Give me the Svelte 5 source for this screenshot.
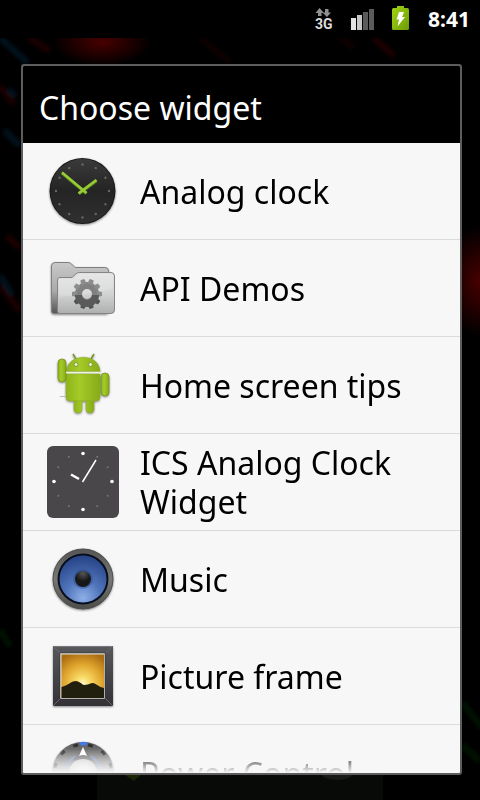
<script>
  const widgets = [
    { id: 'clock', name: 'Analog clock' },
    { id: 'folder', name: 'API Demos' },
    { id: 'android', name: 'Home screen tips' },
    { id: 'ics', name: 'ICS Analog Clock Widget' },
    { id: 'music', name: 'Music' },
    { id: 'frame', name: 'Picture frame' },
    { id: 'power', name: 'Power Control' }
  ];
  const hours = Array.from({ length: 12 }, (_, i) => i);
  const teeth = Array.from({ length: 10 }, (_, i) => i * 36 + 18);
</script>

<div class="screen">
  <svg class="wallpaper" viewBox="0 0 480 800" preserveAspectRatio="xMidYMid slice" aria-hidden="true">
    <defs>
      <radialGradient id="glow"><stop offset="0" stop-color="#480000" /><stop offset="1" stop-color="#480000" stop-opacity="0" /></radialGradient>
      <filter id="soft"><feGaussianBlur stdDeviation="2" /></filter>
    </defs>
    <ellipse cx="102" cy="42" rx="50" ry="24" fill="url(#glow)" />
    <ellipse cx="480" cy="281" rx="38" ry="56" fill="url(#glow)" />
    <g filter="url(#soft)" stroke-width="6" fill="none" opacity=".75">
      <path d="M28 37l22 14M7 236l13 12M0 285l20 26M374 38l20 18M0 86l14 18" stroke="#2c0304" />
      <path d="M0 38l28 25M8 90l8 6M4 130l16 16M0 275l12 20" stroke="#041a2c" />
      <path d="M462 702l20 26M0 630l10 16M462 745l18 16" stroke="#031c06" />
      <path d="M200 38l30 24M338 36l16 12" stroke="#160203" />
    </g>
    <path d="M97 772h286v28H97z" fill="#080a07" />
    <path d="M125 775h16l-7 6z" fill="#182604" />
    <ellipse cx="337" cy="774" rx="15" ry="6" fill="#181a18" />
  </svg>

  <header class="status">
    <svg width="18" height="24" viewBox="0 0 18 24" role="img" aria-label="3G data">
      <path d="M5.500 1L10 6H7.500V9H4V6H1.500zM13 10L8.500 5.500H11V2h3.500V5.500H17z" fill="#909090" />
      <text x="1" y="22">3G</text>
    </svg>
    <svg width="24" height="24" viewBox="0 0 24 24" role="img" aria-label="Signal strength">
      <path d="M1 11h5v12H1z" fill="#e4e4e4" /><path d="M7 8h5v15H7z" fill="#c8c8c8" />
      <path d="M13 5h5v18h-5zM19 2h5v21h-5z" fill="#5b5b5b" />
    </svg>
    <svg width="18" height="26" viewBox="0 0 18 26" role="img" aria-label="Battery charging">
      <defs><linearGradient id="bat" x2="1" y2="1"><stop stop-color="#a4d414" /><stop offset="1" stop-color="#6b9c05" /></linearGradient></defs>
      <path d="M1.500 2H5V0h7v2h3.500Q17 2 17 4v18.500q0 1.500-1.500 1.500h-14Q0 24 0 22.500V4Q0 2 1.500 2z" fill="url(#bat)" />
      <path d="M7 6h5l-2 5h3L5.500 20.500l1.500-7H4.500z" fill="#fff" />
    </svg>
    <time>8:41</time>
  </header>

  <section class="dialog" aria-labelledby="dialog-title">
    <h1 id="dialog-title">Choose widget</h1>
    <ul>
      {#each widgets as widget (widget.id)}
        <li>
          <button type="button">
            <svg class="icon" viewBox="0 0 72 72" aria-hidden="true">
              {#if widget.id === 'clock'}
                <defs><linearGradient id="face" x2="0" y2="1"><stop stop-color="#3a3a3a" /><stop offset=".5" stop-color="#242424" /><stop offset="1" stop-color="#303030" /></linearGradient></defs>
                <circle class="shadow" cx="35.500" cy="36" r="33" fill="#191919" />
                <circle cx="35.500" cy="36" r="32" fill="url(#face)" />
                {#each hours as h}
                  <circle cx="35.500" cy="9.500" r="1.200" fill="#686868" transform="rotate({h * 30} 35.5 36)" />
                {/each}
                <path d="M32 38.500L49.500 25.500M39.500 38.500L15 18" stroke="#527817" stroke-width="3.500" />
                <path d="M31.500 38.500L49.500 25M39.500 38L15 17.500" stroke="#98cb38" stroke-width="2.500" />
              {:else if widget.id === 'folder'}
                <defs>
                  <linearGradient id="back" x2="0" y2="1"><stop stop-color="#c9c9c9" /><stop offset=".55" stop-color="#aaa" /><stop offset="1" stop-color="#555" /></linearGradient>
                  <linearGradient id="front" x2="0" y2="1"><stop stop-color="#e2e2e2" /><stop offset=".5" stop-color="#d3d4d4" /><stop offset="1" stop-color="#aeb0b0" /></linearGradient>
                </defs>
                <path class="shadow" d="M4.500 59V14Q4.500 10.500 8 10.500H21Q23 10.500 24.500 12L28 15.500H58Q61.500 15.500 61.500 19V59Q61.500 61.500 58 61.500H7Q4.500 61.500 4.500 59z" fill="url(#back)" stroke="#808080" />
                <path d="M10.500 59V28Q10.500 25.500 13 25.500H25L30 21Q31 20.500 33 20.500H64Q67.500 20.500 67.500 24V58Q67.500 61.500 64 61.500H13Q10.500 61.500 10.500 59z" fill="url(#front)" stroke="#858585" />
                <path d="M12 45Q40 43 66 37V24Q66 22 64 22H33L26 27H12z" fill="#fff" opacity=".18" />
                <g transform="translate(40 42)">
                  <circle r="8.500" fill="none" stroke="#808080" stroke-width="7" />
                  {#each teeth as a}
                    <path d="M-3-10l1-5h4l1 5z" fill={a > 90 && a < 270 ? '#505151' : '#8c8c8c'} transform="rotate({a})" />
                  {/each}
                  <path d="M-12 1A12 12 0 0 0 12 1L5 1A5 5 0 0 1-5 1z" fill="#5a5a5a" />
                </g>
              {:else if widget.id === 'android'}
                <defs><linearGradient id="bot"><stop stop-color="#8eb41c" /><stop offset=".4" stop-color="#a4cb27" /><stop offset="1" stop-color="#86ab18" /></linearGradient></defs>
                <g class="shadow">
                  <path d="M26 5L29 10M47 5L44 10" stroke="#789525" stroke-width="1.500" />
                  <path d="M19.500 22.500C20.500 3.500 52.500 3.500 53 22.500zM19 25H53V48Q53 52 49 52H23Q19 52 19 48z" fill="url(#bot)" stroke="#8ba926" stroke-width=".5" />
                  <rect x="11" y="10" width="8" height="23" rx="4" fill="url(#bot)" stroke="#6d8e13" stroke-width=".7" />
                  <rect x="54" y="24" width="8" height="23" rx="4" fill="url(#bot)" stroke="#6d8e13" stroke-width=".7" />
                  <path d="M27 52h8v8q0 4-4 4t-4-4zM39 52h8v8q0 4-4 4t-4-4z" fill="url(#bot)" stroke="#8ba926" stroke-width=".5" />
                </g>
                <path d="M19 23.500H53" stroke="#eef5d4" stroke-width="1.500" />
                <g fill="#e8edda" stroke="#728d24" stroke-width=".8"><circle cx="29" cy="15.500" r="2" /><circle cx="43.500" cy="15.500" r="2" /></g>
                <path d="M13 47.500h5" stroke="#bbb" />
              {:else if widget.id === 'ics'}
                <rect width="72" height="72" rx="6" fill="#49474a" />
                {#each hours as h}
                  {#if h % 3 === 0}
                    <circle cx="36" cy={h % 6 === 0 ? 7.5 : 6.5} r="1.800" fill="#fff" transform="rotate({h * 30} 36 35.5)" />
                  {:else}
                    <path d="M35 7h2M36 6v2" stroke="#858386" stroke-width=".7" transform="rotate({h * 30} 36 35.5)" />
                  {/if}
                {/each}
                <path d="M24 28.500L32 33" stroke="#fff" stroke-width="2.500" />
                <path d="M35.500 36L49 14" stroke="#fff" stroke-width="1.500" />
              {:else if widget.id === 'music'}
                <defs>
                  <linearGradient id="rim" x2="0" y2="1"><stop stop-color="#555" /><stop offset=".5" stop-color="#777773" /><stop offset="1" stop-color="#4c4c49" /></linearGradient>
                  <radialGradient id="cone" cx=".5" cy=".9" r=".85"><stop stop-color="#8eafe8" /><stop offset=".45" stop-color="#5074ba" /><stop offset="1" stop-color="#29468a" /></radialGradient>
                  <radialGradient id="cap" cx=".5" cy=".15"><stop stop-color="#555" /><stop offset="1" stop-color="#171717" /></radialGradient>
                </defs>
                <circle class="shadow" cx="36" cy="36" r="30" fill="url(#rim)" stroke="#4c4c4a" />
                <circle cx="36" cy="36" r="25.500" fill="#080e1e" />
                <circle cx="36" cy="36" r="23.500" fill="url(#cone)" />
                <circle cx="36" cy="36" r="10" fill="#26478b" opacity=".4" />
                <circle cx="36" cy="36" r="8" fill="url(#cap)" />
              {:else if widget.id === 'frame'}
                <defs>
                  <radialGradient id="sun" cx=".5" cy=".68" r=".75"><stop stop-color="#fffad0" /><stop offset=".2" stop-color="#fadc6a" /><stop offset=".6" stop-color="#e0a62e" /><stop offset="1" stop-color="#a96c12" /></radialGradient>
                  <linearGradient id="wood" x2="0" y2="1"><stop stop-color="#58595c" /><stop offset="1" stop-color="#333136" /></linearGradient>
                </defs>
                <rect class="shadow" x="6" y="6" width="60" height="60" rx="1" fill="url(#wood)" />
                <path d="M6 66L14 58M66 66L58 58M6 6l7 7M66 6l-7 7" stroke="#65656a" />
                <path d="M7 6.500H65" stroke="#77787b" />
                <rect x="13" y="13" width="45" height="46" fill="#e4e0d9" stroke="#27262a" stroke-width=".5" />
                <rect x="14.500" y="14.500" width="42.500" height="43" fill="url(#sun)" />
                <path d="M14.500 47q4-1 7-3 4-3 7-3 3 0 8 4 3 0 6-1 3-2 6 0 4 3 8.500 4v10H14.500z" fill="#211f0d" />
              {:else}
                <defs>
                  <linearGradient id="dial" x2="0" y2="1"><stop stop-color="#5d5d5d" /><stop offset=".45" stop-color="#999" /><stop offset="1" stop-color="#888" /></linearGradient>
                  <radialGradient id="knob"><stop stop-color="#fff" /><stop offset="1" stop-color="#d2d2d2" /></radialGradient>
                </defs>
                <circle class="shadow" cx="36" cy="36" r="31" fill="url(#dial)" />
                <circle cx="36" cy="36" r="28.500" fill="none" stroke="#333" stroke-width="3" stroke-dasharray="5 9.900" stroke-dashoffset="-5" />
                <path d="M32 5.500Q36 4 41 5.500L39 8.500H34z" fill="#427be7" />
                <circle cx="36" cy="36" r="18" fill="none" stroke="#7796dc" stroke-width="1.500" />
                <path d="M26 23L36 9L46 23z" fill="#717171" />
                <circle cx="36" cy="36" r="14" fill="url(#knob)" />
                <path d="M36 10L40 19Q36 17 32 19z" fill="#fff" />
              {/if}
            </svg>
            <span>{widget.name}</span>
          </button>
        </li>
      {/each}
    </ul>
  </section>
</div>

<style>
  :global(body) { margin: 0; background: #000; }
  .screen {
    position: relative;
    box-sizing: border-box;
    height: 100vh;
    display: flex;
    flex-direction: column;
    overflow: hidden;
    background: #000;
    font-family: "Noto Sans", "Open Sans", sans-serif;
  }
  .wallpaper { position: absolute; inset: 0; width: 100%; height: 100%; }
  .status {
    position: relative;
    flex: none;
    box-sizing: border-box;
    height: 38px;
    padding-right: 10px;
    display: flex;
    align-items: center;
    justify-content: flex-end;
    gap: 18px;
    background: #000;
    color: #fff;
  }
  .status svg { overflow: visible; }
  .status text { font: bold 14px Roboto, sans-serif; fill: #ddd; }
  .status time { font-size: 21px; font-weight: 700; line-height: 38px; }
  .dialog {
    position: relative;
    flex: 1;
    min-height: 0;
    margin: 26px 18px 25px 21px;
    display: flex;
    flex-direction: column;
    border: 2px solid #5d5d5d;
    border-radius: 3px;
    background: #f7f7f7;
    overflow: hidden;
  }
  h1 {
    flex: none;
    margin: 0;
    padding: 22px 16px 16px;
    background: #000;
    color: #fff;
    font-size: 32px;
    font-weight: 400;
    line-height: 39px;
  }
  ul {
    flex: 1;
    min-height: 0;
    margin: 0;
    padding: 0;
    overflow: hidden;
    list-style: none;
    mask-image: linear-gradient(to top, transparent, #000 24px);
  }
  li { border-bottom: 1px solid #dadada; }
  button {
    width: 100%;
    min-height: 96px;
    display: flex;
    align-items: center;
    gap: 21px;
    padding: 0 24px;
    border: 0;
    background: none;
    color: #000;
    font: inherit;
    font-size: 32px;
    line-height: 39px;
    text-align: left;
    cursor: pointer;
  }
  .icon { flex: none; width: 72px; height: 72px; overflow: visible; }
  .shadow { filter: drop-shadow(0 1px 1px rgb(0 0 0 / 45%)); }
</style>
